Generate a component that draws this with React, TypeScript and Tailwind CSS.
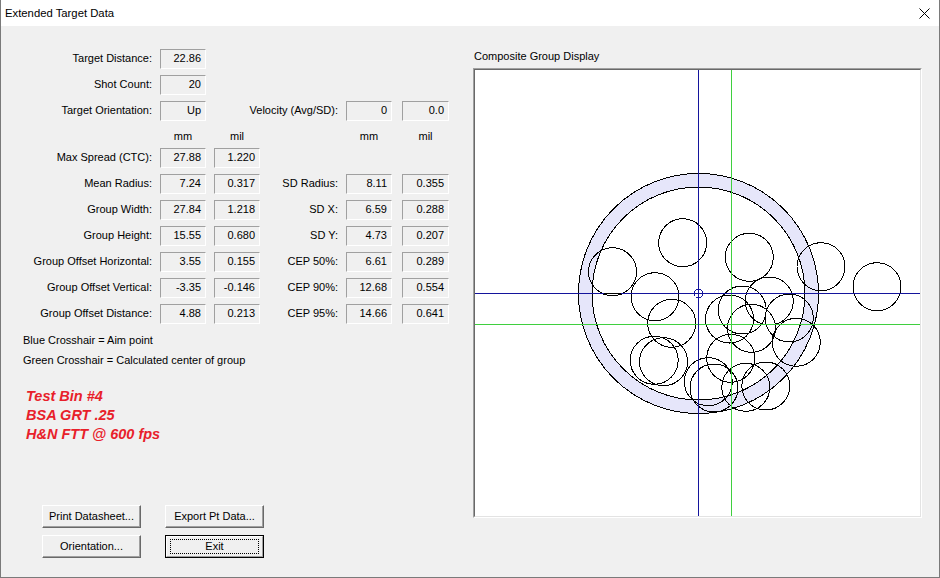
import React from "react";

type Shot = [number, number];

// shot centres in page pixels (chart svg uses a viewBox in the same coordinates)
const shots: Shot[] = [
  [682.7, 242.7],
  [612.5, 271.7],
  [655, 296.7],
  [671.7, 323.3],
  [654.2, 360.3],
  [663.5, 361.7],
  [708.3, 381.7],
  [714, 388],
  [749.3, 257.3],
  [821, 266.7],
  [877, 286.7],
  [769.3, 301],
  [742.2, 310],
  [729.5, 319],
  [751.5, 328.3],
  [789.3, 318],
  [796.3, 342.3],
  [730.7, 358.3],
  [745.8, 387.3],
  [765.8, 386],
];

const mainRows: string[][] = [
  ["Max Spread (CTC):", "27.88", "1.220"],
  ["Mean Radius:", "7.24", "0.317", "SD Radius:", "8.11", "0.355"],
  ["Group Width:", "27.84", "1.218", "SD X:", "6.59", "0.288"],
  ["Group Height:", "15.55", "0.680", "SD Y:", "4.73", "0.207"],
  ["Group Offset Horizontal:", "3.55", "0.155", "CEP 50%:", "6.61", "0.289"],
  ["Group Offset Vertical:", "-3.35", "-0.146", "CEP 90%:", "12.68", "0.554"],
  ["Group Offset Distance:", "4.88", "0.213", "CEP 95%:", "14.66", "0.641"],
];

function Field({ value, wide }: { value: string; wide?: boolean }) {
  return (
    <div
      className={`${wide ? "w-[47px]" : "w-[46px]"} h-[20px] shrink-0 flex items-center justify-end pr-[4px] pb-[2px] border border-t-[#a0a0a0] border-l-[#a0a0a0] border-b-white border-r-white text-black`}
    >
      {value}
    </div>
  );
}

// right-aligned label; long text spills to the left like the dialog's static text
function Label({ text, width }: { text: string; width: string }) {
  return (
    <div className={`${width} shrink-0 flex justify-end pr-[8px] pb-[2px] whitespace-nowrap`}>
      <span className="shrink-0">{text}</span>
    </div>
  );
}

function Button({ label, isDefault }: { label: string; isDefault?: boolean }) {
  if (isDefault) {
    return (
      <div className="w-[99px] h-[23px] border border-black">
        <div className="w-full h-full flex items-center justify-center border-t border-l border-t-white border-l-white border-b border-r border-b-[#a0a0a0] border-r-[#a0a0a0]">
          <div className="w-[89px] h-[15px] border border-dotted border-black flex items-center justify-center">
            {label}
          </div>
        </div>
      </div>
    );
  }
  return (
    <div className="w-[99px] h-[23px] flex items-center justify-center border border-t-white border-l-white border-b-[#696969] border-r-[#696969] shadow-[inset_-1px_-1px_0_#a0a0a0]">
      {label}
    </div>
  );
}

function Chart() {
  const cx = 698.5;
  const cy = 293.5;
  return (
    <svg width={445} height={446} viewBox="475 70 445 446" className="block">
      <rect x={475} y={70} width={445} height={446} fill="#ffffff" />
      <g shapeRendering="crispEdges">
        <circle cx={cx} cy={cy} r={113.25} fill="none" stroke="#e6e6fa" strokeWidth={13.5} />
        <circle cx={cx} cy={cy} r={120} fill="none" stroke="#000000" strokeWidth={1} />
        <circle cx={cx} cy={cy} r={106.5} fill="none" stroke="#000000" strokeWidth={1} />
        {shots.map(([x, y], i) => (
          <circle key={i} cx={x} cy={y} r={24} fill="none" stroke="#000000" strokeWidth={1} />
        ))}
      </g>
      {/* crosshairs: green = group centre, blue = aim point */}
      <rect x={731} y={70} width={1} height={446} fill="#3fcf3f" />
      <rect x={475} y={324} width={445} height={1} fill="#3fcf3f" />
      <rect x={698} y={70} width={1} height={446} fill="#14149c" />
      <rect x={475} y={293} width={445} height={1} fill="#14149c" />
      <rect x={604} y={293} width={17} height={1} fill="#000000" />
      <circle cx={cx} cy={cy} r={4.5} fill="none" stroke="#14149c" strokeWidth={1} shapeRendering="crispEdges" />
    </svg>
  );
}

export default function App() {
  return (
    <div
      className="w-[940px] h-[578px] flex flex-col border-l border-r border-b border-[#7a7a7a] text-[11px] leading-[13px] text-black overflow-hidden"
      style={{ fontFamily: '"Liberation Sans", Arial, sans-serif' }}
    >
      {/* title bar */}
      <div className="h-[26px] shrink-0 bg-white flex items-center justify-between pl-[4px] pr-[9px]">
        <span className="text-[11.3px]">Extended Target Data</span>
        <svg width={11} height={11} viewBox="0 0 11 11" className="block">
          <path d="M0.5 0.5 L10.5 10.5 M10.5 0.5 L0.5 10.5" stroke="#000" strokeWidth={1} />
        </svg>
      </div>

      <div className="flex-1 bg-[#f0f0f0] flex">
        {/* left side: statistics */}
        <div className="w-[472px] shrink-0 flex flex-col pt-[20px] pb-[19px]">
          <div className="flex items-center h-[26px]">
            <Label text="Target Distance:" width="w-[159px]" />
            <Field value="22.86" />
          </div>
          <div className="flex items-center h-[26px]">
            <Label text="Shot Count:" width="w-[159px]" />
            <Field value="20" />
          </div>
          <div className="flex items-center h-[26px]">
            <Label text="Target Orientation:" width="w-[159px]" />
            <Field value="Up" />
            <div className="w-[54px] shrink-0" />
            <Label text="Velocity (Avg/SD):" width="w-[86px]" />
            <Field value="0" />
            <div className="w-[10px] shrink-0" />
            <Field value="0.0" wide />
          </div>

          <div className="flex h-[21px] pt-[6px]">
            <div className="w-[159px] shrink-0" />
            <div className="w-[46px] shrink-0 text-center">mm</div>
            <div className="w-[8px] shrink-0" />
            <div className="w-[46px] shrink-0 text-center">mil</div>
            <div className="w-[86px] shrink-0" />
            <div className="w-[46px] shrink-0 text-center">mm</div>
            <div className="w-[10px] shrink-0" />
            <div className="w-[47px] shrink-0 text-center">mil</div>
          </div>

          {mainRows.map((row) => (
            <div key={row[0]} className="flex items-center h-[26px]">
              <Label text={row[0]} width="w-[159px]" />
              <Field value={row[1]} />
              <div className="w-[8px] shrink-0" />
              <Field value={row[2]} />
              {row.length > 3 && (
                <>
                  <Label text={row[3]} width="w-[86px]" />
                  <Field value={row[4]} />
                  <div className="w-[10px] shrink-0" />
                  <Field value={row[5]} wide />
                </>
              )}
            </div>
          ))}

          <div className="mt-[3px] pl-[22px] leading-[20px]">
            <div>Blue Crosshair = Aim point</div>
            <div>Green Crosshair = Calculated center of group</div>
          </div>

          <div className="mt-[17px] pl-[25px] text-[14.5px] leading-[19px] font-bold italic text-[#e8202a]">
            <div>Test Bin #4</div>
            <div>BSA GRT .25</div>
            <div>H&amp;N FTT @ 600 fps</div>
          </div>

          <div className="mt-auto pl-[41px] flex flex-col gap-[7px]">
            <div className="flex gap-[24px]">
              <Button label="Print Datasheet..." />
              <Button label="Export Pt Data..." />
            </div>
            <div className="flex gap-[24px]">
              <Button label="Orientation..." />
              <Button label="Exit" isDefault />
            </div>
          </div>
        </div>

        {/* right side: composite group display */}
        <div className="flex flex-col pt-[24px]">
          <div className="pl-[1px]">Composite Group Display</div>
          <div className="mt-[5px] w-[449px] h-[450px] border border-t-[#a0a0a0] border-l-[#a0a0a0] border-b-white border-r-white">
            <div className="w-full h-full border border-t-[#696969] border-l-[#696969] border-b-[#e3e3e3] border-r-[#e3e3e3]">
              <Chart />
            </div>
          </div>
        </div>
      </div>
    </div>
  );
}
